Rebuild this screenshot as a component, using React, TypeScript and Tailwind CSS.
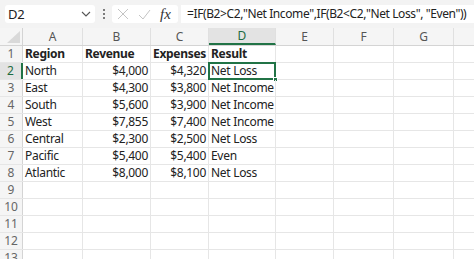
import React from "react";

const cols = ["A", "B", "C", "D", "E", "F", "G", ""];
const widths = [60, 68, 58, 67, 58, 60, 60, 60];

type Cell = { t: string; right?: boolean; bold?: boolean };
const data: Cell[][] = [
  [{ t: "Region", bold: true }, { t: "Revenue", bold: true }, { t: "Expenses", bold: true }, { t: "Result", bold: true }],
  [{ t: "North" }, { t: "$4,000", right: true }, { t: "$4,320", right: true }, { t: "Net Loss" }],
  [{ t: "East" }, { t: "$4,300", right: true }, { t: "$3,800", right: true }, { t: "Net Income" }],
  [{ t: "South" }, { t: "$5,600", right: true }, { t: "$3,900", right: true }, { t: "Net Income" }],
  [{ t: "West" }, { t: "$7,855", right: true }, { t: "$7,400", right: true }, { t: "Net Income" }],
  [{ t: "Central" }, { t: "$2,300", right: true }, { t: "$2,500", right: true }, { t: "Net Loss" }],
  [{ t: "Pacific" }, { t: "$5,400", right: true }, { t: "$5,400", right: true }, { t: "Even" }],
  [{ t: "Atlantic" }, { t: "$8,000", right: true }, { t: "$8,100", right: true }, { t: "Net Loss" }],
];

const font = { fontFamily: '"Noto Sans", "Open Sans", sans-serif' };

export default function App() {
  const rows = Array.from({ length: 13 }, (_, i) => i + 1);
  return (
    <div className="w-[474px] h-[259px] overflow-hidden bg-white text-[#222]" style={font}>
      {/* formula bar */}
      <div className="h-[28px] bg-[#f3f3f3] flex items-center pl-[5px]">
        <div className="w-[90px] shrink-0 h-[18px] bg-white rounded-[3px] flex items-center justify-between pl-[3px] pr-[4px]">
          <span className="text-[13px] leading-none text-[#222] tracking-[-0.2px]">D2</span>
          <svg width="10" height="6" viewBox="0 0 10 6"><path d="M1 1l4 4 4-4" fill="none" stroke="#555" strokeWidth="1.1" /></svg>
        </div>
        <div className="w-[17px] shrink-0 flex flex-col items-center gap-[2px]">
          <span className="w-[2px] h-[2px] bg-[#555] rounded-full" />
          <span className="w-[2px] h-[2px] bg-[#555] rounded-full" />
          <span className="w-[2px] h-[2px] bg-[#555] rounded-full" />
        </div>
        <div className="w-[66px] shrink-0 h-[18px] bg-white rounded-[3px] flex items-center pl-[5px] gap-[9px]">
          <svg width="12" height="12" viewBox="0 0 12 12"><path d="M1 1l10 10M11 1L1 11" stroke="#c4c4c4" strokeWidth="1" /></svg>
          <svg width="13" height="11" viewBox="0 0 13 11"><path d="M1 6l4 4 7-9" fill="none" stroke="#c4c4c4" strokeWidth="1" /></svg>
          <span className="text-[15px] italic leading-none text-[#333]" style={{ fontFamily: '"Liberation Serif", serif' }}>fx</span>
        </div>
        <div className="flex-1 min-w-0 overflow-hidden h-[18px] bg-white ml-[3px] flex items-center pl-[6px]">
          <span className="text-[12px] leading-none whitespace-nowrap text-[#222] tracking-[-0.4px]">=IF(B2&gt;C2,"Net Income",IF(B2&lt;C2,"Net Loss", "Even"))</span>
        </div>
      </div>
      {/* column headers */}
      <div className="flex h-[18px] bg-[#f5f5f5] border-b border-[#d4d4d4]">
        <div className="w-[23px] shrink-0 relative border-r border-[#d4d4d4]">
          <svg className="absolute right-[2px] bottom-[2px]" width="13" height="12" viewBox="0 0 13 12"><path d="M13 0V12H0Z" fill="#d9d9d9" /></svg>
        </div>
        {cols.map((c, i) => (
          <div
            key={i}
            className={`shrink-0 flex items-center justify-center text-[12px] border-r border-[#e0e0e0] ${c === "D" ? "bg-[#e3e3e3] text-[#1e6b41] border-b-2 border-b-[#217346]" : "text-[#555]"}`}
            style={{ width: widths[i] }}
          >
            {c}
          </div>
        ))}
      </div>
      {/* rows */}
      {rows.map((r) => (
        <div key={r} className="flex h-[17px] border-b border-[#e6e6e6]">
          <div className={`w-[23px] shrink-0 flex items-center justify-center text-[12px] border-r ${r === 2 ? "bg-[#e3e3e3] text-[#1e6b41] border-r-2 border-r-[#217346]" : "bg-[#f5f5f5] text-[#666] border-[#d4d4d4]"}`}>
            {r}
          </div>
          {cols.map((c, i) => {
            const cell = data[r - 1]?.[i];
            const sel = r === 2 && c === "D";
            return (
              <div
                key={i}
                className={`shrink-0 relative flex items-center px-[2px] text-[12px] leading-none whitespace-nowrap border-r border-[#e6e6e6] ${cell?.right ? "justify-end" : "justify-start"} ${cell?.bold ? "font-bold tracking-[-0.3px]" : "tracking-[-0.3px]"}`}
                style={{ width: widths[i] }}
              >
                {cell?.t}
                {sel && (
                  <>
                    <div className="absolute left-[-1px] top-[-1px] right-[-1px] bottom-[-1px] border-2 border-[#217346]" />
                    <div className="absolute right-[-3px] bottom-[-3px] w-[5px] h-[5px] bg-[#217346] border border-white" />
                  </>
                )}
              </div>
            );
          })}
        </div>
      ))}
    </div>
  );
}
